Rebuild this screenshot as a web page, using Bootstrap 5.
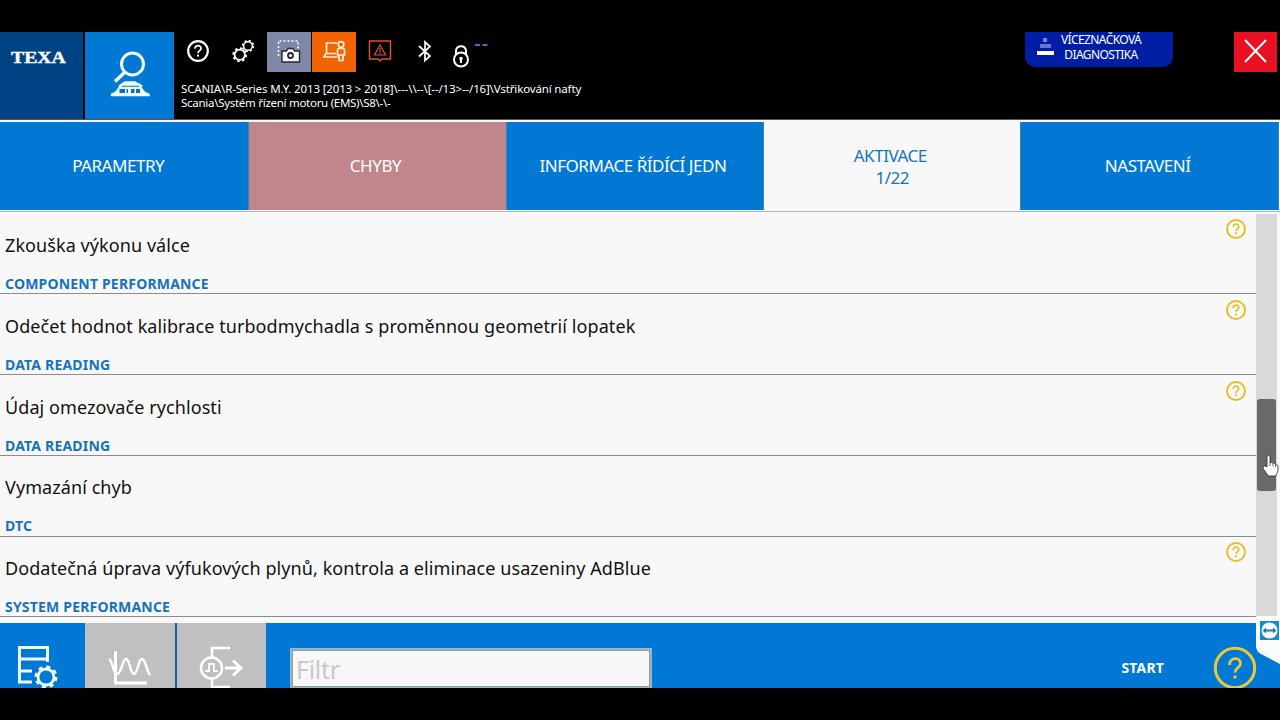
<!DOCTYPE html>
<html lang="cs">
<head>
<meta charset="utf-8">
<title>TEXA – Aktivace</title>
<link href="https://cdn.jsdelivr.net/npm/bootstrap@5.3.0/dist/css/bootstrap.min.css" rel="stylesheet">
<style>
body{width:1280px;height:720px;padding:32px 0;background:#000;font-family:"Noto Sans","Open Sans",sans-serif;overflow:hidden}
svg{display:block;flex:none}
.app{height:656px;overflow:hidden}
.topbar{height:87px;background:#000;color:#fff}
.brand{width:83px;background:#004385;font:bold 17px/20px "Liberation Serif",serif;padding:16px 0 0 11px}
.brand span{display:inline-block;transform-origin:0 50%;transform:scaleX(1.16);-webkit-text-stroke:.4px #fff}
.vehicle{width:89px;margin-left:2px;background:#0078d4}
.tools{padding-left:2px}
.tool{width:44px;height:40px;margin-right:1.4px}
.tool-gray{background:#7f86a6}
.tool-orange{background:#f26403}
.path-text{font-size:11.5px;line-height:14px;white-space:nowrap;margin:10px 0 0 7px;letter-spacing:-.15px}
.path-text div+div{letter-spacing:-.28px}
.multi{width:148px;height:35px;background:#001ea4;border-radius:0 0 10px 10px;font-size:12px;line-height:15px;margin-left:auto;padding-left:11px;margin-right:61px}
.multi .label{width:106px;text-align:center;letter-spacing:-.6px;margin-left:-7px}
.close-btn{width:43px;height:40px;background:#e81123;margin-right:3px}
.tabs{height:92px;background:#f8f8f8;border-top:1px solid #555;padding-top:2px}
.tabs .tab{width:257.4px;height:88px;background:#0078d4;color:#fff;font-size:17px;line-height:22px;padding-right:4px;text-align:center;letter-spacing:-.47px;border-right:1px solid #3f83b4}
.tabs .tab:first-child{width:249.3px;padding-right:12px}
.tabs .tab.errors{background:#c1868c}
.tabs .tab.current{background:#f8f8f8;color:#1475bd;padding-top:1px}
.tab span{display:block}
.tab .count{padding-left:4px}
.content{height:407px;background:#f8f8f8;border-top:1px solid #b5b5b5;padding-top:1px}
.entries{width:1256px;display:grid;grid-template-rows:81px 81px 81px 81px 80px}
.entry{border-bottom:1px solid #8b8b8b;padding:0 9px 0 5px}
.entry.short{padding-bottom:1px}
.entry h2{font-size:18px;line-height:24px;font-weight:400;color:#111;margin:0;padding-bottom:18px;white-space:nowrap;letter-spacing:.08px}
.entry h3{font-size:14px;line-height:18px;font-weight:700;color:#1673ba;margin:0;white-space:nowrap;letter-spacing:.19px}
.entry svg{margin-top:5px}
.entry:last-child svg{margin-top:4px}
.track{width:21px;height:403px;background:#d9d9d9;margin-top:1px;position:relative}
.thumb{margin:185px 0 0 1px;width:19px;height:92px;background:#696969;border-radius:3px}
.cursor{position:absolute;left:6px;top:239px}
.bottom{height:70px;background:#0078d4;border-top:5px solid #f8f8f8;position:relative}
.ico-cell{height:65px}
.ico-off{background:#c0c0c0}
.ico-split{border-left:2px solid #12649d}
.filter{width:362px;height:41px;margin:25px 0 0 24px;border:2px solid #91b7cc;background:#f7f7f7}
.filter .inner{border:1px solid #999;height:37px;font-size:25px;line-height:36px;color:#c9c9c9;padding-left:3px;letter-spacing:-.3px}
.start{font-size:14px;font-weight:700;color:#fff;line-height:20px}
.start span{display:block;margin:35px 49px 0 0;letter-spacing:.15px}
.start svg{margin:23px 23px 0 0}
.tv{position:absolute;right:0;top:-7px}
</style>
</head>
<body>
<svg width="0" height="0" class="position-absolute">
<symbol id="help" viewBox="0 0 22 22"><circle cx="11" cy="11" r="9" fill="none" stroke="currentColor" stroke-width="2"/><path d="M8.2 9C8 5.2 14 5.2 13.8 8.8C13.7 10.7 11 10.7 11 13" fill="none" stroke="currentColor" stroke-width="1.6"/><rect x="10.1" y="14.3" width="1.8" height="1.8" fill="currentColor"/></symbol>
<symbol id="gear" viewBox="-12 -12 24 24"><circle r="8" fill="none" stroke="currentColor" stroke-width="2.8"/><circle r="10.2" fill="none" stroke="currentColor" stroke-width="2.6" stroke-dasharray="4 4.01"/></symbol>
</svg>
<main class="app">
<header class="topbar d-flex">
  <div class="brand"><span>TEXA</span></div>
  <div class="vehicle"><svg width="89" height="87" fill="none" stroke="#f0fbff"><circle cx="47.500" cy="32" r="11" stroke-width="3"/><path d="M40 40L30 49.500" stroke-width="3.500"/><path d="M26 64V62L30 60L34 55H56L60 60L64.500 62V64Z" fill="#f0fbff" stroke-width=".5"/><path d="M34 55L37 52.500H54L57 55M38 52L40 50.500H50L52 52" stroke-width="2.500"/><path d="M34.500 57H40V61H34.500ZM46 57H49.500V61H46ZM51 57H55V61H51ZM41.500 57H43V61H41.500Z" fill="#0b6fc0" stroke="none"/></svg></div>
  <div>
    <div class="tools d-flex">
      <div class="tool"><svg width="44" height="40" class="text-white"><use href="#help" x="10" y="6" width="24" height="26"/></svg></div>
      <div class="tool"><svg width="44" height="40" class="text-white"><use href="#gear" x="11" y="15" width="15.500" height="15.500"/><use href="#gear" x="20.500" y="7.500" width="13" height="13"/></svg></div>
      <div class="tool tool-gray"><svg width="44" height="40" fill="none"><path d="M11.500 24V9H31V17" stroke="#fff" stroke-width="1.600" stroke-dasharray="2 2"/><path d="M15 19H19.500L21 16.500H26L27.500 19H32.500V30H15Z" fill="#fff" stroke="#26262d" stroke-width="1.400"/><circle cx="23.500" cy="23.500" r="3.400" fill="#26262d"/><circle cx="23.500" cy="23.500" r="1.600" fill="#fff"/></svg></div>
      <div class="tool tool-orange"><svg width="44" height="40" fill="none" stroke="#fff0dc" stroke-width="1.700"><path d="M25 11H14.500V21.500H24M14 21.500L12 25H25.500"/><circle cx="29" cy="12.500" r="2.800"/><path d="M25.500 23V18Q25.500 16.500 27 16.500H31Q32.500 16.500 32.500 18V23Z"/><path d="M27 23V28.500H31V23"/></svg></div>
      <div class="tool"><svg width="44" height="40" fill="none" stroke="#d9532c" stroke-width="1.500"><path d="M11.500 9H32.500V27H24L22 29L20 27H11.500Z"/><path d="M22 13L27.500 23H16.500Z" stroke-width="1.200"/><path d="M22 16V20M22 21V22" stroke-width="1.200"/></svg></div>
      <div class="tool"><svg width="44" height="40" fill="none" stroke="#fff" stroke-width="1.700"><path d="M16 14L27 24L22 28.500V10L27 14.500L16 24.500"/></svg></div>
      <div class="tool"><svg width="50" height="40" fill="none" stroke="#fff" stroke-width="2" class="overflow-visible"><circle cx="13" cy="27.500" r="7"/><path d="M8 22V19C8 12.500 18 12.500 18 19V22"/><circle cx="13" cy="26.500" r="1.700" fill="#fff" stroke="none"/><path d="M13 27V31"/><path d="M27 13H32M34.500 13H39.500" stroke="#2f7ab5" stroke-width="2"/></svg></div>
    </div>
    <div class="path-text"><div>SCANIA\R-Series M.Y. 2013 [2013 &gt; 2018]\---\\--\[--/13&gt;--/16]\Vstřikování nafty</div><div>Scania\Systém řízení motoru (EMS)\S8\-\-</div></div>
  </div>
  <div class="multi d-flex"><svg width="19" height="35"><path d="M7 6h4v4H7z" fill="#7383d0"/><path d="M4 12h11v4H4z" fill="#6576d2"/><path d="M1 19h17v4H1z" fill="#fff"/></svg><div class="label">VÍCEZNAČKOVÁ<br>DIAGNOSTIKA</div></div>
  <div class="close-btn"><svg width="43" height="40"><path d="M11 8L32 30M32 8L11 30" stroke="#fff" stroke-width="2"/></svg></div>
</header>
<nav class="tabs d-flex">
  <div class="tab d-flex align-items-center justify-content-center"><span>PARAMETRY</span></div>
  <div class="tab errors d-flex align-items-center justify-content-center"><span>CHYBY</span></div>
  <div class="tab d-flex align-items-center justify-content-center"><span>INFORMACE ŘÍDÍCÍ JEDN</span></div>
  <div class="tab current d-flex flex-column align-items-center justify-content-center"><span>AKTIVACE</span><span class="count">1/22</span></div>
  <div class="tab d-flex align-items-center justify-content-center"><span>NASTAVENÍ</span></div>
</nav>
<section class="content d-flex">
  <div class="entries">
    <article class="entry d-flex justify-content-between"><div class="align-self-end"><h2>Zkouška výkonu válce</h2><h3>COMPONENT PERFORMANCE</h3></div><svg width="22" height="22" color="#e9bd20"><use href="#help"/></svg></article>
    <article class="entry d-flex justify-content-between"><div class="align-self-end"><h2>Odečet hodnot kalibrace turbodmychadla s proměnnou geometrií lopatek</h2><h3>DATA READING</h3></div><svg width="22" height="22" color="#e9bd20"><use href="#help"/></svg></article>
    <article class="entry d-flex justify-content-between"><div class="align-self-end"><h2>Údaj omezovače rychlosti</h2><h3>DATA READING</h3></div><svg width="22" height="22" color="#e9bd20"><use href="#help"/></svg></article>
    <article class="entry short d-flex"><div class="align-self-end"><h2>Vymazání chyb</h2><h3>DTC</h3></div></article>
    <article class="entry d-flex justify-content-between"><div class="align-self-end"><h2>Dodatečná úprava výfukových plynů, kontrola a eliminace usazeniny AdBlue</h2><h3>SYSTEM PERFORMANCE</h3></div><svg width="22" height="22" color="#e9bd20"><use href="#help"/></svg></article>
  </div>
  <div class="track d-flex"><div class="thumb"></div>
    <svg class="cursor" width="17" height="24" viewBox="0 0 17 24"><path d="M5 14V4C5 1.500 8 1.500 8 4V10C9 8.800 10.500 9.500 11 10.500C12 9.800 13.300 10.300 13.500 11.500C14.800 11 16 12 16 13.500V17C16 20 14 20.500 14 23H6C5 20 2 18 1 15C.5 13 3 12 5 14Z" fill="#fff" stroke="#222" stroke-width=".8"/><path d="M8 10V13M11 11V13.500M13.500 12V14" stroke="#222" stroke-width=".7"/></svg>
  </div>
</section>
<footer class="bottom d-flex">
  <div class="ico-cell"><svg width="85" height="65" fill="none" stroke="#f0fbff" stroke-width="3"><path d="M32 59H19.500V24.500H47.500V39M19.500 36H47.500M19.500 48H32"/><use href="#gear" x="34" y="42" width="24" height="24" color="#f0fbff"/></svg></div>
  <div class="ico-cell ico-off"><svg width="90" height="65" fill="none" stroke="#fff" stroke-width="2.500"><path d="M30.500 28V60H62" stroke-width="3"/><path d="M24 36C28 38 28 51 32 51C37 51 37 36 41 36S45 51 49 51S53 36 57 36S61 47 65 52"/></svg></div>
  <div class="ico-cell ico-off ico-split"><svg width="89" height="65" fill="none" stroke="#fff" stroke-width="2.500"><path d="M53 25H35V35M35 55V64H53"/><circle cx="34.500" cy="45" r="10.500"/><path d="M28 48H32V41H37V48H41" stroke-width="1.800"/><path d="M48 45H63M56 37.500L64 45L56 52.500" stroke-width="3"/></svg></div>
  <div class="filter"><div class="inner">Filtr</div></div>
  <div class="start ms-auto d-flex align-items-start"><span>START</span><svg width="44" height="44" color="#e9c83a"><circle cx="22" cy="22" r="19.700" fill="none" stroke="currentColor" stroke-width="3"/><path d="M16.500 19C16.500 10.500 28.500 11 27.500 18C27 21.500 22 22 22 26.500" fill="none" stroke="currentColor" stroke-width="2.800"/><path d="M20.500 29.500h3v3h-3z" fill="currentColor"/></svg></div>
  <svg class="tv" width="24" height="50"><path d="M0 2Q0 0 2 0H24V48L5 38Q0 35 0 30Z" fill="#fafbfc"/><rect x="4" y="5" width="19" height="19" fill="#168bd0"/><circle cx="13.500" cy="14.500" r="8" fill="#fff"/><path d="M6.500 14.500L10 11.500V13.500H17V11.500L20.500 14.500L17 17.500V15.500H10V17.500Z" fill="#137cc1"/></svg>
</footer>
</main>
<script src="https://cdn.jsdelivr.net/npm/bootstrap@5.3.0/dist/js/bootstrap.bundle.min.js"></script>
</body>
</html>
